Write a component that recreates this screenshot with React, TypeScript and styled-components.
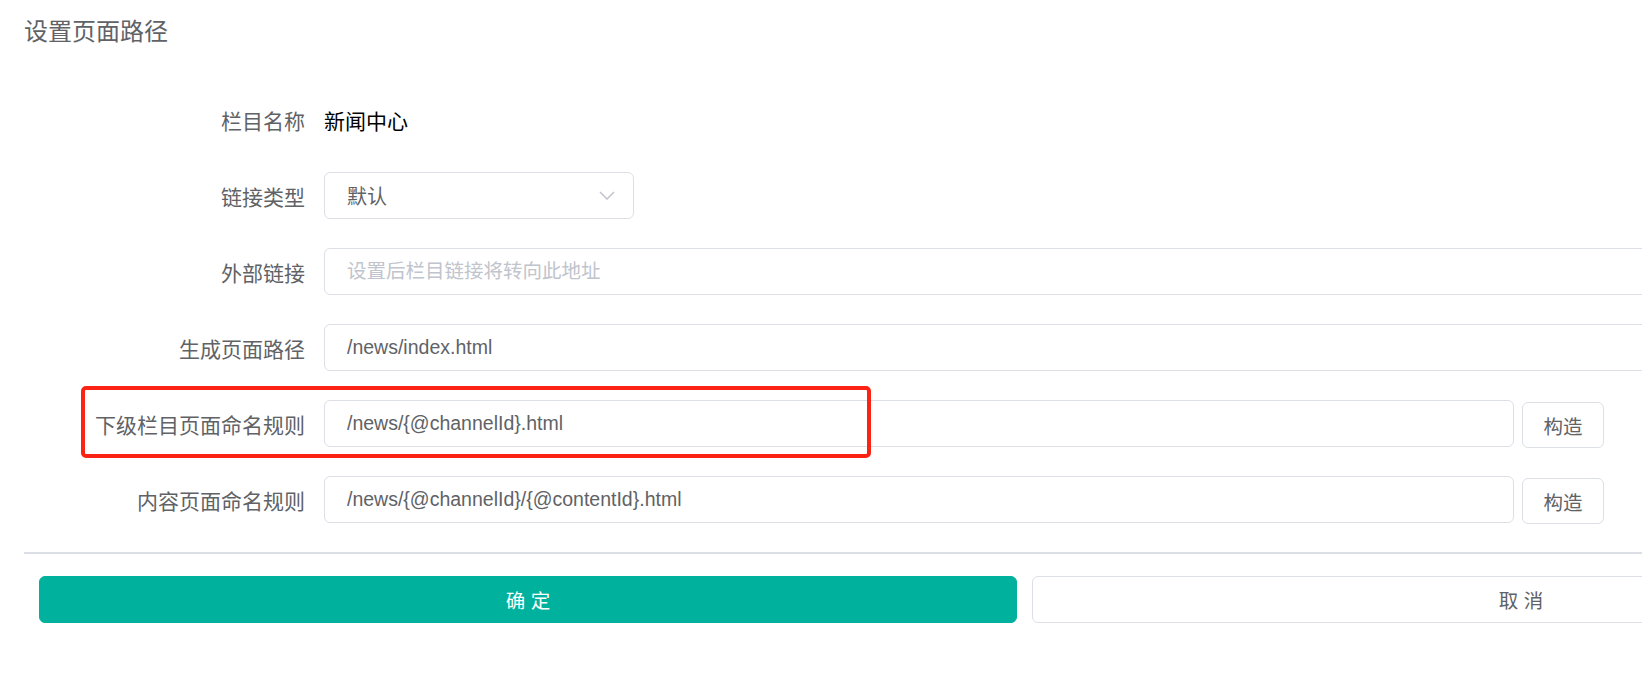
import React from "react";
import styled, { createGlobalStyle } from "styled-components";

const GlobalStyle = createGlobalStyle`
  html, body {
    margin: 0;
    padding: 0;
    background: #fff;
    overflow: hidden;
  }
  body {
    font-family: "Liberation Sans", "Noto Sans CJK SC", sans-serif;
  }
`;

const Page = styled.div`
  width: 2040px;
  padding-left: 24px;
  box-sizing: border-box;
`;

const Title = styled.div`
  font-size: 24px;
  line-height: 36px;
  color: #606266;
  padding-top: 14px;
  height: 96px;
  box-sizing: border-box;
`;

const Row = styled.div`
  position: relative;
  display: flex;
  align-items: center;
  height: 47px;
  margin-bottom: 29px;
`;

const Label = styled.label`
  flex: 0 0 300px;
  box-sizing: border-box;
  padding-right: 19px;
  text-align: right;
  font-size: 21px;
  color: #606266;
`;

const Value = styled.span`
  font-size: 21px;
  color: #000;
`;

const Input = styled.input<{ $width: number }>`
  width: ${(p) => p.$width}px;
  height: 47px;
  box-sizing: border-box;
  border: 1px solid #dcdfe6;
  border-radius: 6px;
  padding: 0 22px;
  font-family: inherit;
  font-size: 19.5px;
  color: #606266;
  outline: none;
  background: #fff;

  &::placeholder {
    color: #c0c4cc;
  }
`;

const Select = styled.div`
  width: 310px;
  height: 47px;
  box-sizing: border-box;
  border: 1px solid #dcdfe6;
  border-radius: 6px;
  padding: 0 18px 0 22px;
  display: flex;
  align-items: center;
  justify-content: space-between;
  font-size: 20px;
  color: #606266;
`;

const SideButton = styled.button`
  align-self: flex-start;
  margin-top: 2px;
  margin-left: 8px;
  width: 82px;
  height: 46px;
  box-sizing: border-box;
  border: 1px solid #dcdfe6;
  border-radius: 6px;
  background: #fff;
  font-family: inherit;
  font-size: 19.5px;
  color: #606266;
  padding: 0;
`;

const Highlight = styled.div`
  position: absolute;
  left: 57px;
  top: -14px;
  width: 790px;
  height: 72px;
  box-sizing: border-box;
  border: 4px solid #fa2314;
  border-radius: 5px;
  pointer-events: none;
`;

const Divider = styled.div`
  height: 2px;
  background: #dcdfe6;
`;

const Actions = styled.div`
  display: flex;
  gap: 15px;
  padding: 22px 0 0 15px;
`;

const ActionButton = styled.button<{ $primary?: boolean }>`
  width: 978px;
  height: 47px;
  box-sizing: border-box;
  border-radius: 6px;
  border: 1px solid ${(p) => (p.$primary ? "#00b19d" : "#dcdfe6")};
  background: ${(p) => (p.$primary ? "#00b19d" : "#fff")};
  color: ${(p) => (p.$primary ? "#fff" : "#606266")};
  font-family: inherit;
  font-size: 19.5px;
  padding: 0;
`;

const Chevron = () => (
  <svg width="16" height="9" viewBox="0 0 16 9">
    <polyline
      points="1,1 8,8 15,1"
      fill="none"
      stroke="#c0c4cc"
      strokeWidth="1.5"
    />
  </svg>
);

const App: React.FC = () => {
  return (
    <>
      <GlobalStyle />
      <Page>
        <Title>设置页面路径</Title>
        <Row>
          <Label>栏目名称</Label>
          <Value>新闻中心</Value>
        </Row>
        <Row>
          <Label>链接类型</Label>
          <Select>
            <span>默认</span>
            <Chevron />
          </Select>
        </Row>
        <Row>
          <Label>外部链接</Label>
          <Input $width={1686} placeholder="设置后栏目链接将转向此地址" />
        </Row>
        <Row>
          <Label>生成页面路径</Label>
          <Input $width={1686} defaultValue="/news/index.html" />
        </Row>
        <Row>
          <Highlight />
          <Label>下级栏目页面命名规则</Label>
          <Input $width={1190} defaultValue="/news/{@channelId}.html" />
          <SideButton>构造</SideButton>
        </Row>
        <Row>
          <Label>内容页面命名规则</Label>
          <Input
            $width={1190}
            defaultValue="/news/{@channelId}/{@contentId}.html"
          />
          <SideButton>构造</SideButton>
        </Row>
        <Divider />
        <Actions>
          <ActionButton $primary>确 定</ActionButton>
          <ActionButton>取 消</ActionButton>
        </Actions>
      </Page>
    </>
  );
};

export default App;
